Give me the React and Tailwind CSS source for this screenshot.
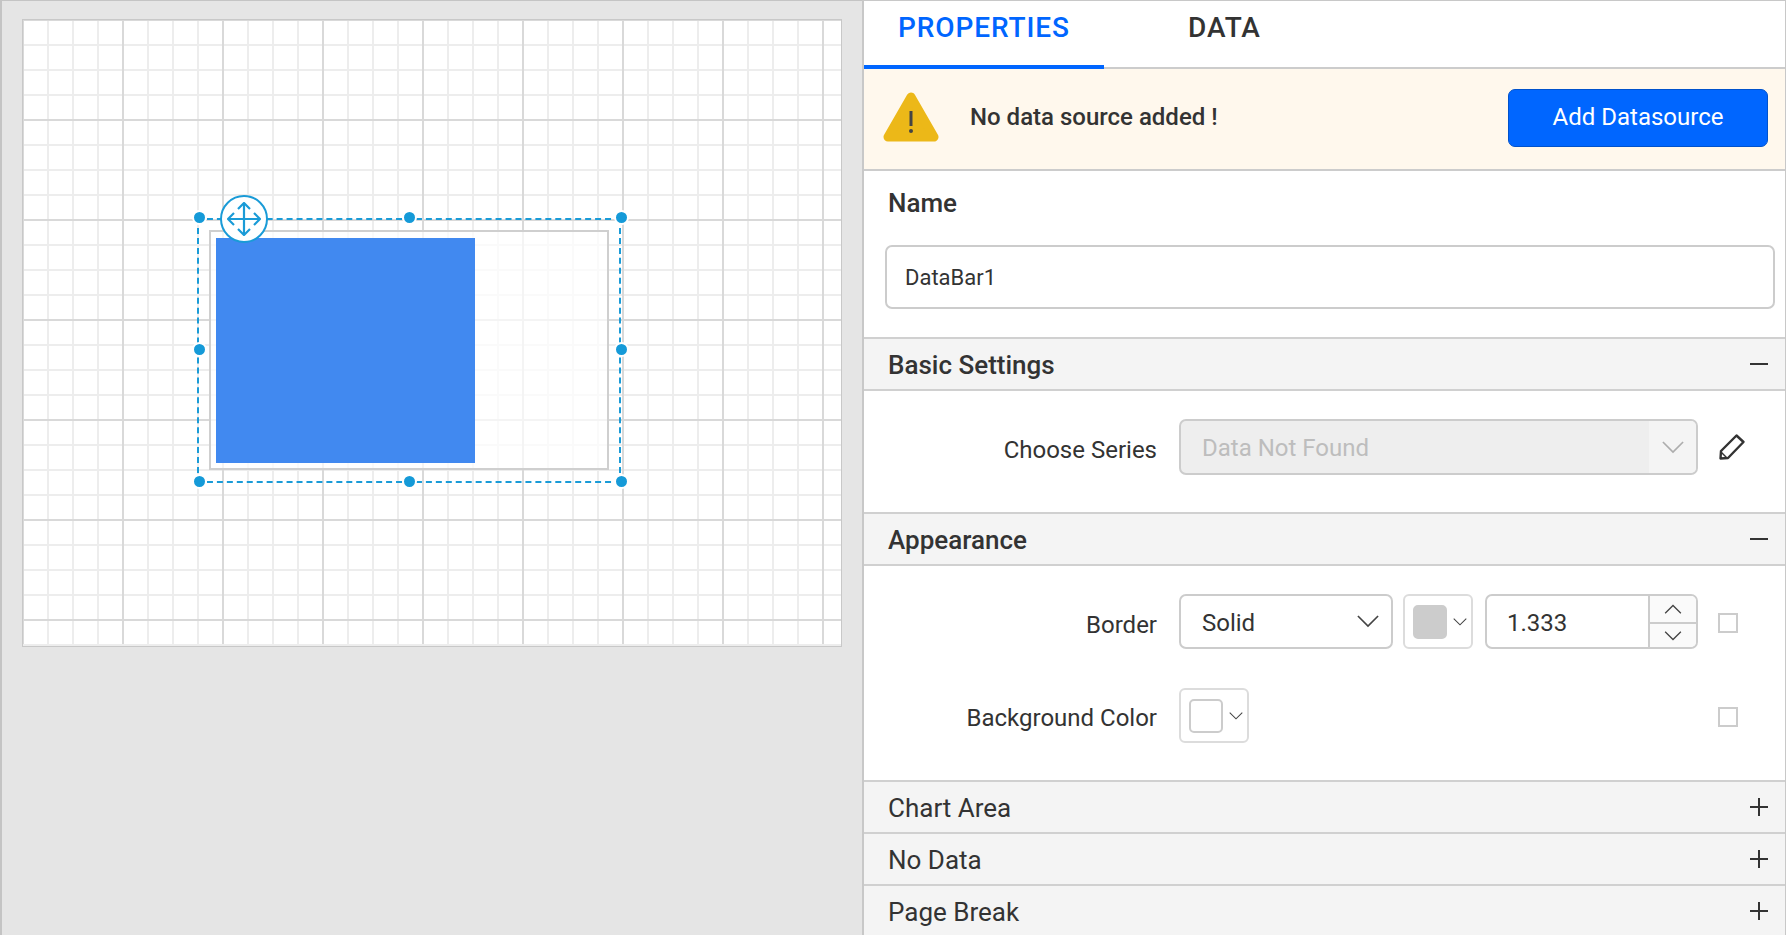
import React from 'react';

// thin chevron used by the dropdowns
const Chevron = ({ up, className }) => (
  <svg viewBox="0 0 24 14" fill="none" stroke="#444" strokeWidth="1.8" className={className}>
    <path d={up ? 'M1 13 L12 2 L23 13' : 'M1 1 L12 12 L23 1'} />
  </svg>
);

const Handle = ({ className }) => (
  <div className={`absolute w-[15px] h-[15px] rounded-full bg-[#159ad8] border-2 border-white ${className}`}></div>
);

const MoveIcon = () => (
  <svg width="34" height="34" viewBox="0 0 34 34" fill="none" stroke="#1a9bd7" strokeWidth="2.2">
    <path d="M17 1 V33 M1 17 H33" />
    <path d="M11 7 L17 1 L23 7 M11 27 L17 33 L23 27 M7 11 L1 17 L7 23 M27 11 L33 17 L27 23" />
  </svg>
);

const WarningIcon = () => (
  <svg width="56" height="50" viewBox="0 0 56 50" className="-translate-y-[2px]">
    <path d="M28 5 L51 45 H5 Z" fill="#ecb818" stroke="#ecb818" strokeWidth="9" strokeLinejoin="round" />
    <path d="M28 19 V34" stroke="#444" strokeWidth="3" />
    <circle cx="28" cy="39" r="2" fill="#444" />
  </svg>
);

const PencilIcon = () => (
  <svg width="28" height="28" viewBox="0 0 28 28" fill="none" stroke="#333" strokeWidth="2.4" strokeLinejoin="round">
    <path d="M2.5 25.5 L3 18 L18.5 2.5 L25.5 9 L10 25 Z" />
    <path d="M3 19 L9 25" strokeWidth="1.4" />
  </svg>
);

const SectionHeader = ({ title, open }) => (
  <div className="h-[52px] shrink-0 flex items-center justify-between pl-[24px] pr-[17px] bg-[#f4f4f4] border-b-2 border-[#d0d0d0]">
    <span className={`text-[26px] text-[#333] translate-y-[1px] ${open ? 'font-medium' : ''}`}>{title}</span>
    <div className="relative w-[18px] h-[18px]">
      <div className={`absolute left-0 w-[18px] h-[2px] bg-[#333] ${open ? 'top-[8px]' : 'top-[8px]'}`}></div>
      {!open && <div className="absolute left-[8px] top-0 w-[2px] h-[18px] bg-[#333]"></div>}
    </div>
  </div>
);

const ColorPicker = ({ swatch }) => (
  <div className="w-[70px] h-[55px] flex items-center pl-[8px] gap-[6px] border-2 border-[#dcdcdc] rounded-[6px] bg-white shrink-0">
    <div className={`w-[34px] h-[34px] rounded-[5px] border-2 border-[#ccc] ${swatch}`}></div>
    <Chevron className="w-[14px] h-[8px]" />
  </div>
);

const Checkbox = () => <div className="w-[20px] h-[20px] border-2 border-[#ccc] bg-white shrink-0 translate-y-[1px]"></div>;

export default function App() {
  return (
    <div className="w-[1786px] h-[935px] flex overflow-hidden bg-[#e5e5e5] [font-family:Roboto,sans-serif]">
      {/* Designer surface */}
      <div className="w-[862px] h-full border-l-2 border-t border-[#c4c4c4] pl-[20px] pt-[18px] shrink-0">
        <div className="relative w-[820px] h-[628px] border border-[#c8c8c8] bg-white [background-image:linear-gradient(to_right,#d9d9d9_2px,transparent_2px),linear-gradient(to_bottom,#d9d9d9_2px,transparent_2px),linear-gradient(to_right,#ededed_2px,transparent_2px),linear-gradient(to_bottom,#ededed_2px,transparent_2px)] [background-size:100px_624px,100%_100px,25px_624px,100%_25px] [background-repeat:repeat-x,repeat-y,repeat-x,repeat-y] [background-position:-1px_0,0_-1px,-1px_0,0_-1px]">
          {/* Gauge item */}
          <div className="absolute left-[186px] top-[210px] w-[400px] h-[240px] border-2 border-[#cfcfcf] bg-white/70"></div>
          <div className="absolute left-[193px] top-[218px] w-[259px] h-[225px] bg-[#4189f0]"></div>
          <div className="absolute left-[174px] top-[198px] w-[424px] h-[265px] border-2 border-dashed border-[#1a9bd7]"></div>
          <Handle className="left-[169px] top-[190px]" />
          <Handle className="left-[379px] top-[190px]" />
          <Handle className="left-[591px] top-[190px]" />
          <Handle className="left-[169px] top-[322px]" />
          <Handle className="left-[591px] top-[322px]" />
          <Handle className="left-[169px] top-[454px]" />
          <Handle className="left-[379px] top-[454px]" />
          <Handle className="left-[591px] top-[454px]" />
          <div className="absolute left-[197px] top-[175px] w-[48px] h-[48px] rounded-full bg-white border-2 border-[#1a9bd7] flex items-center justify-center">
            <MoveIcon />
          </div>
        </div>
      </div>

      {/* Properties panel */}
      <div className="flex-1 h-full flex flex-col bg-white border-l-2 border-r border-t border-[#c8c8c8] overflow-hidden">
        <div className="h-[68px] shrink-0 flex border-b-2 border-[#ccc] text-[28px] font-medium tracking-[0.9px]">
          <div className="w-[240px] h-[68px] border-b-4 border-[#0066ff] text-[#0066ff] pl-[34px] pt-[6px] shrink-0">PROPERTIES</div>
          <div className="pl-[84px] pt-[6px] text-[#333]">DATA</div>
        </div>

        <div className="h-[102px] shrink-0 flex items-center bg-[#fff8ed] border-b-2 border-[#ccc] pl-[19px] pr-[17px]">
          <WarningIcon />
          <span className="ml-[31px] text-[24px] font-medium text-[#333] -translate-y-[2px]">No data source added !</span>
          <button className="ml-auto mb-[3px] w-[260px] h-[58px] pb-[2px] rounded-[7px] bg-[#0066ff] border border-[#0052cc] text-white text-[24px]">Add Datasource</button>
        </div>

        <div className="h-[168px] shrink-0 border-b-2 border-[#d0d0d0] pt-[16px]">
          <div className="pl-[24px] text-[26px] leading-[32px] font-medium text-[#333]">Name</div>
          <div className="mt-[26px] ml-[21px] mr-[10px] h-[64px] flex items-center pl-[18px] border-2 border-[#ccc] rounded-[7px] text-[22px] text-[#333]">DataBar1</div>
        </div>

        <SectionHeader title="Basic Settings" open />
        <div className="h-[123px] shrink-0 border-b-2 border-[#d0d0d0] pt-[28px]">
          <div className="flex items-center h-[56px]">
            <div className="w-[293px] text-right text-[24px] text-[#333] translate-y-[3px] shrink-0">Choose Series</div>
            <div className="ml-[22px] w-[519px] h-[56px] flex border-2 border-[#ccc] rounded-[7px] bg-[#eeeeee] overflow-hidden">
              <div className="flex-1 flex items-center pl-[21px] text-[24px] text-[#bdbdbd] translate-y-[1px]">Data Not Found</div>
              <div className="w-[47px] flex items-center justify-center bg-[#f4f4f4]">
                <Chevron className="w-[22px] h-[13px] opacity-40" />
              </div>
            </div>
            <div className="ml-[20px]"><PencilIcon /></div>
          </div>
        </div>

        <SectionHeader title="Appearance" open />
        <div className="h-[216px] shrink-0 border-b-2 border-[#d0d0d0] pt-[28px]">
          <div className="flex items-center h-[55px]">
            <div className="w-[293px] text-right text-[24px] text-[#333] translate-y-[3px] shrink-0">Border</div>
            <div className="ml-[22px] w-[214px] h-[55px] flex items-center justify-between pl-[21px] pr-[12px] border-2 border-[#ccc] rounded-[7px] text-[24px] text-[#333] shrink-0">
              <span className="translate-y-[1px]">Solid</span>
              <Chevron className="w-[22px] h-[13px]" />
            </div>
            <div className="ml-[10px]"><ColorPicker swatch="bg-[#cccccc]" /></div>
            <div className="ml-[12px] w-[213px] h-[55px] flex border-2 border-[#ccc] rounded-[7px] overflow-hidden shrink-0">
              <div className="flex-1 flex items-center pl-[20px] text-[24px] text-[#333] translate-y-[1px]">1.333</div>
              <div className="w-[48px] flex flex-col border-l-2 border-[#ccc] bg-[#fafafa]">
                <div className="h-[28px] flex items-center justify-center border-b-2 border-[#ccc]"><Chevron up className="w-[18px] h-[10px]" /></div>
                <div className="flex-1 flex items-center justify-center"><Chevron className="w-[18px] h-[10px]" /></div>
              </div>
            </div>
            <div className="ml-[20px]"><Checkbox /></div>
          </div>
          <div className="flex items-center h-[55px] mt-[39px]">
            <div className="w-[293px] text-right text-[24px] text-[#333] translate-y-[2px] shrink-0">Background Color</div>
            <div className="ml-[22px]"><ColorPicker swatch="bg-white" /></div>
            <div className="ml-[469px]"><Checkbox /></div>
          </div>
        </div>

        <SectionHeader title="Chart Area" />
        <SectionHeader title="No Data" />
        <SectionHeader title="Page Break" />
      </div>
    </div>
  );
}
